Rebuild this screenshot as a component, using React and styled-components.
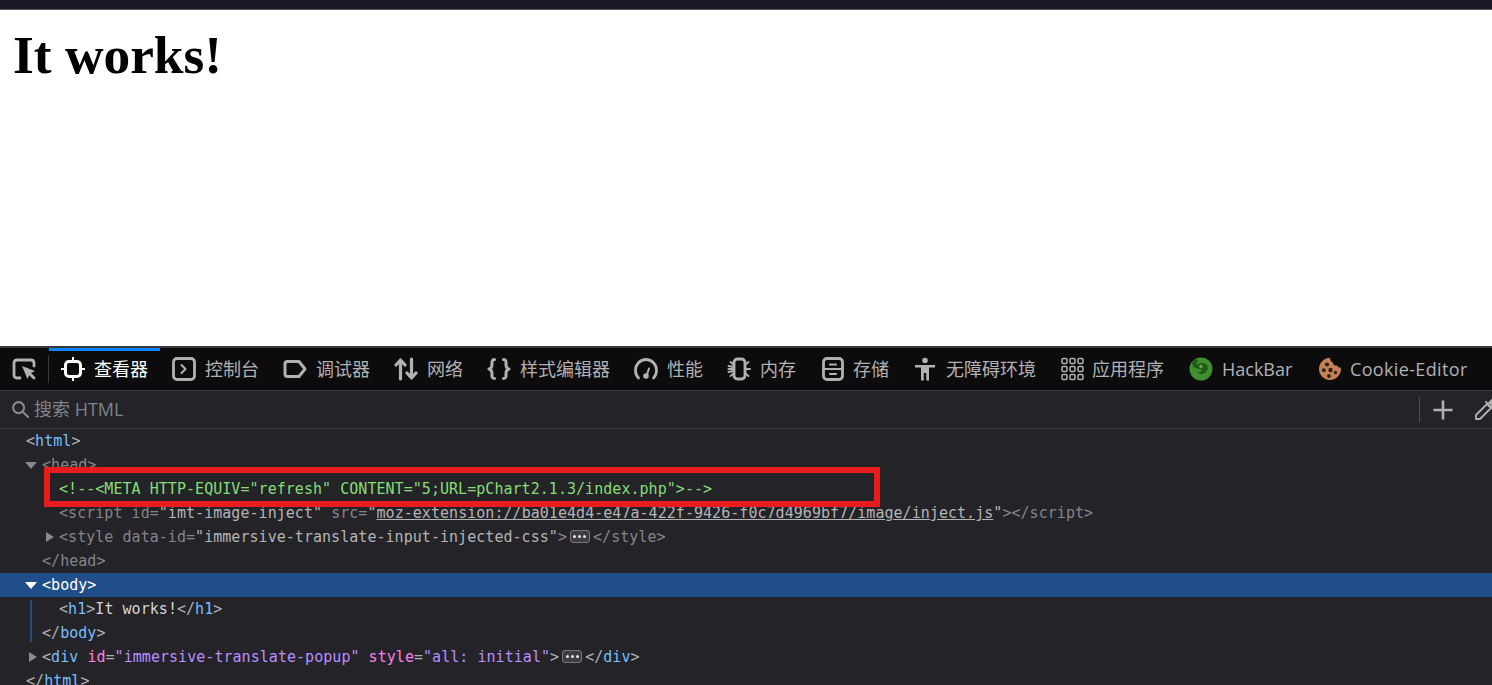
import React from "react";
import styled, { createGlobalStyle } from "styled-components";

const GlobalStyle = createGlobalStyle`
  html, body { margin: 0; padding: 0; height: 100%; overflow: hidden; background: #232328; }
  #root { height: 100%; }
`;

const Screen = styled.div`
  height: 685px;
  display: flex;
  flex-direction: column;
  overflow: hidden;
`;

const BrowserEdge = styled.div`
  height: 9px;
  flex: none;
  background: #1a1825;
  border-bottom: 1px solid #55555c;
`;

const PageArea = styled.div`
  height: 336px;
  flex: none;
  background: #fff;
  padding: 14px 0 0 13px;
  box-sizing: border-box;
`;

const Heading = styled.h1`
  margin: 0;
  font: bold 53.4px/62px "Liberation Serif", "Times New Roman", serif;
  color: #000;
`;

const Toolbar = styled.div`
  height: 42px;
  flex: none;
  display: flex;
  align-items: stretch;
  background: #0c0c0d;
  border-top: 2px solid #38383d;
  border-bottom: 1px solid #38383d;
  overflow: hidden;
`;

const PickerButton = styled.div`
  width: 36px;
  padding-left: 12px;
  display: flex;
  align-items: center;
  color: #b1b1b3;
`;

const ToolbarSep = styled.div`
  width: 1px;
  height: 28px;
  align-self: center;
  background: #38383d;
`;

const Tab = styled.div`
  position: relative;
  display: flex;
  align-items: center;
  flex: none;
  width: ${(p) => p.$width}px;
  box-sizing: border-box;
  padding-left: 12px;
  gap: ${(p) => p.$gap}px;
  color: ${(p) => (p.$active ? "#fff" : "#b1b1b3")};
  font: 18px/24px "Open Sans", "Noto Sans CJK SC", sans-serif;
  white-space: nowrap;
  &::before {
    content: "";
    display: ${(p) => (p.$active ? "block" : "none")};
    position: absolute;
    left: 0;
    right: 0;
    top: 0;
    height: 3px;
    background: #0a84ff;
  }
`;

const TabLabel = styled.span`
  letter-spacing: ${(p) => p.$spread || 0}px;
`;

const Icon = styled.svg`
  width: 24px;
  height: 24px;
  flex: none;
  fill: none;
  stroke: currentColor;
  stroke-width: ${(p) => (p.$sw === undefined ? 2.2 : p.$sw)};
  stroke-linecap: round;
  stroke-linejoin: round;
`;

const SearchIcon = styled(Icon)`
  width: 19px;
  height: 19px;
  color: #8a8a8e;
`;

const SearchBar = styled.div`
  height: 37px;
  flex: none;
  display: flex;
  align-items: center;
  padding-left: 11px;
  background: #232328;
  border-bottom: 1px solid #38383d;
  overflow: hidden;
`;

const SearchText = styled.div`
  flex: 1;
  margin-left: 4px;
  padding-bottom: 2px;
  color: #7f8389;
  font: 18px/24px "Open Sans", "Noto Sans CJK SC", sans-serif;
`;

const SearchSep = styled.div`
  width: 1px;
  height: 25px;
  background: #4a4a4f;
`;

const SearchAction = styled.div`
  flex: none;
  width: 24px;
  height: 24px;
  margin-left: ${(p) => p.$gap}px;
  margin-right: ${(p) => p.$after || 0}px;
  color: #b1b1b3;
`;

const Tree = styled.div`
  position: relative;
  flex: 1;
  background: #232328;
  font: 15px/24px "DejaVu Sans Mono", "Liberation Mono", monospace;
  letter-spacing: 0.04px;
  overflow: hidden;
`;

const Row = styled.div`
  position: relative;
  height: 24px;
  box-sizing: border-box;
  padding-left: ${(p) => p.$indent}px;
  white-space: nowrap;
  background: ${(p) => (p.$selected ? "#204e8a" : "transparent")};
  &::before {
    content: "";
    display: ${(p) => (p.$guide ? "block" : "none")};
    position: absolute;
    left: 30px;
    top: ${(p) => (p.$guide === "start" ? 3 : 0)}px;
    bottom: ${(p) => (p.$guide === "end" ? 3 : 0)}px;
    width: 2px;
    background: #204e8a;
  }
`;

const Twisty = styled.span`
  position: absolute;
  left: ${(p) => p.$left}px;
  top: ${(p) => (p.$open ? 9 : 7)}px;
  width: 0;
  height: 0;
  ${(p) =>
    p.$open
      ? `border-left: 6px solid transparent; border-right: 6px solid transparent; border-top: 7px solid ${p.$color};`
      : `border-top: 5.5px solid transparent; border-bottom: 5.5px solid transparent; border-left: 8px solid ${p.$color};`}
`;

const tokenColors = {
  punct: "#b1b1b3",
  tag: "#75bfff",
  attr: "#ff7de9",
  value: "#b98eff",
  comment: "#86de74",
  dim: "#858589",
  soft: "#b4b4b6",
  text: "#d7d7db",
  white: "#fff",
};

const Tok = styled.span`
  color: ${(p) => tokenColors[p.$kind]};
  text-decoration: ${(p) => (p.$link ? "underline" : "none")};
`;

const Ellipsis = styled.span`
  display: inline-flex;
  align-items: center;
  justify-content: center;
  gap: 2px;
  width: 20px;
  height: 13px;
  margin: 0 3px;
  vertical-align: 4px;
  box-sizing: border-box;
  border: 1px solid #77777b;
  border-radius: 3px;
  background: #3d3d42;
`;

const Dot = styled.i`
  display: block;
  width: 3px;
  height: 3px;
  border-radius: 50%;
  background: #e6e6e8;
`;

const RedBox = styled.div`
  position: absolute;
  left: 44px;
  top: 38px;
  width: 836px;
  height: 40px;
  box-sizing: border-box;
  border: 6px solid #e81c1c;
`;

const More = () => (
  <Ellipsis>
    <Dot />
    <Dot />
    <Dot />
  </Ellipsis>
);

const tabs = [
  {
    label: "查看器", width: 111, gap: 9, active: true,
    icon: (
      <Icon viewBox="0 0 24 24" $sw={3}>
        <rect x="4.5" y="4.5" width="15" height="15" rx="3.5" />
        <path d="M12 0.5V3.5M12 20.5V23.5M0.5 12H3.5M20.5 12H23.5" strokeWidth="2" />
      </Icon>
    ),
  },
  {
    label: "控制台", width: 111, gap: 9,
    icon: (
      <Icon viewBox="0 0 24 24" $sw={2.8}>
        <rect x="1.5" y="1.5" width="21" height="21" rx="3.5" />
        <path d="M9.5 8L13.5 12L9.5 16" strokeWidth="2" />
      </Icon>
    ),
  },
  {
    label: "调试器", width: 111, gap: 9,
    icon: (
      <Icon viewBox="0 0 24 24" $sw={3}>
        <path d="M4.5 4.5H16L22 12L16 19.5H4.5C3 19.5 2 18.5 2 17V7C2 5.5 3 4.5 4.5 4.5Z" />
      </Icon>
    ),
  },
  {
    label: "网络", width: 93, gap: 9,
    icon: (
      <Icon viewBox="0 0 24 24" $sw={3.2}>
        <path d="M6.5 22V3M2 8L6.5 3L11 8M17.5 2V21M13 16L17.5 21L22 16" />
      </Icon>
    ),
  },
  {
    label: "样式编辑器", width: 147, gap: 9,
    icon: (
      <Icon viewBox="0 0 24 24" $sw={3}>
        <path d="M7.5 2.5C4.5 2.5 5 5 5 7.5C5 10 4.5 11.5 2 12C4.5 12.5 5 14 5 16.5C5 19 4.5 21.5 7.5 21.5" />
        <path d="M16.5 2.5C19.5 2.5 19 5 19 7.5C19 10 19.5 11.5 22 12C19.5 12.5 19 14 19 16.5C19 19 19.5 21.5 16.5 21.5" />
      </Icon>
    ),
  },
  {
    label: "性能", width: 93, gap: 9,
    icon: (
      <Icon viewBox="0 0 24 24" $sw={2.8}>
        <path d="M4.5 21C2.5 19 1.5 16.5 1.5 13.5C1.5 7.5 6 2.5 12 2.5C18 2.5 22.5 7.5 22.5 13.5C22.5 16.5 21.5 19 19.5 21" />
        <path d="M12.5 19L15 11.5" strokeWidth="2" />
        <circle cx="12" cy="19" r="2.8" fill="currentColor" stroke="none" />
      </Icon>
    ),
  },
  {
    label: "内存", width: 94, gap: 9,
    icon: (
      <Icon viewBox="0 0 24 24" $sw={1.9}>
        <rect x="7" y="2" width="11" height="20" rx="3.5" strokeWidth="2.8" />
        <path d="M3.5 5L6.5 7.5M1.5 12H6.5M3.5 19L6.5 16.5M1.5 9L6.5 10M1.5 15L6.5 14M21.5 5L18.5 7.5M23 12H18.5M21.5 19L18.5 16.5" />
      </Icon>
    ),
  },
  {
    label: "存储", width: 92, gap: 8,
    icon: (
      <Icon viewBox="0 0 24 24" $sw={2.2}>
        <rect x="2.5" y="1.5" width="19" height="21" rx="3.5" strokeWidth="2.8" />
        <path d="M2.5 12H21.5M9 7.5H15M9 17H15" />
      </Icon>
    ),
  },
  {
    label: "无障碍环境", width: 148, gap: 9,
    icon: (
      <Icon viewBox="0 0 24 24" $sw={0}>
        <circle cx="12" cy="3.5" r="2.8" fill="currentColor" />
        <path d="M2 8H22V10.6H16V23.5H13.2V16H10.8V23.5H8V10.6H2Z" fill="currentColor" />
      </Icon>
    ),
  },
  {
    label: "应用程序", width: 128, gap: 7,
    icon: (
      <Icon viewBox="0 0 24 24" $sw={1.5}>
        {[1.5, 9.5, 17.5].flatMap((y) =>
          [1.5, 9.5, 17.5].map((x) => <rect key={x + "-" + y} x={x - 0.5} y={y} width="5" height="5" rx="1.2" />)
        )}
      </Icon>
    ),
  },
  {
    label: "HackBar", width: 129, gap: 9,
    icon: (
      <Icon viewBox="0 0 24 24" $sw={0}>
        <circle cx="12" cy="12" r="11.5" fill="#3f8f2f" />
        <path d="M3 5C5 2 8 2 10 3C8 4 7 6 8 8C10 6 14 5 17 7C20 9 19 14 16 16C13 18 9 17 8 15C10 16 12 15 13 13C11 12 8 12 6 11C4 10 3 7 3 5Z" fill="#1f5c1a" />
        <circle cx="12" cy="9.5" r="1.8" fill="#5fa845" />
      </Icon>
    ),
  },
  {
    label: "Cookie-Editor", width: 160, gap: 8, spread: 0.35,
    icon: (
      <Icon viewBox="0 0 24 24" $sw={0}>
        <path d="M12 0.8C6 1 1 6 1 12C1 18 6 23 12 23C18 23 23 18 23 12C23 11.5 23 11 22.8 10.6C21 10.8 19.5 10 19 8.6C16.8 8.8 15 7.5 14.8 5.5C13.2 4.8 12 3 12 0.8Z" fill="#c68058" />
        <circle cx="9" cy="7.5" r="2.1" fill="#2b211c" />
        <circle cx="5.8" cy="13.2" r="1.9" fill="#2b211c" />
        <circle cx="12.5" cy="13" r="2.2" fill="#2b211c" />
        <circle cx="17.5" cy="15.5" r="1.7" fill="#2b211c" />
        <circle cx="11" cy="19" r="1.9" fill="#2b211c" />
      </Icon>
    ),
  },
];

export default function App() {
  return (
    <Screen>
      <GlobalStyle />
      <BrowserEdge />
      <PageArea>
        <Heading>It works!</Heading>
      </PageArea>

      <Toolbar>
        <PickerButton>
          <Icon viewBox="0 0 24 24" $sw={2.8}>
            <path d="M8 21H5C3 21 2 20 2 18V6C2 4 3 3 5 3H19C21 3 22 4 22 6V9" />
            <path d="M10 9L23 14L18 16.5L15.5 22Z" fill="currentColor" stroke="none" />
            <path d="M17 16L22 21" />
          </Icon>
        </PickerButton>
        <ToolbarSep />
        {tabs.map((t) => (
          <Tab key={t.label} $active={t.active} $width={t.width} $gap={t.gap}>
            {t.icon}
            <TabLabel $spread={t.spread}>{t.label}</TabLabel>
          </Tab>
        ))}
      </Toolbar>

      <SearchBar>
        <SearchIcon viewBox="0 0 20 20" $sw={2.2}>
          <circle cx="8" cy="8" r="5.8" />
          <path d="M12.5 12.5L18 18" />
        </SearchIcon>
        <SearchText>搜索 HTML</SearchText>
        <SearchSep />
        <SearchAction $gap={11}>
          <Icon viewBox="0 0 24 24" $sw={2.6}>
            <path d="M12 2.5V21.5M2.5 12H21.5" strokeLinecap="butt" />
          </Icon>
        </SearchAction>
        <SearchAction $gap={18} $after={-5}>
          <Icon viewBox="0 0 24 24" $sw={1.8}>
            <path d="M14 6L18 10L7 21H3V17Z" />
            <path d="M13 4L20 11M16 5L19 2C20 1 22 1 23 2C24 3 24 5 23 6L19 8" fill="currentColor" />
          </Icon>
        </SearchAction>
      </SearchBar>

      <Tree>
        <Row $indent={26}>
          <Tok $kind="punct">&lt;</Tok><Tok $kind="tag">html</Tok><Tok $kind="punct">&gt;</Tok>
        </Row>
        <Row $indent={42}>
          <Twisty $open $left={25} $color="#8a8a8e" />
          <Tok $kind="dim">&lt;head&gt;</Tok>
        </Row>
        <Row $indent={59}>
          <Tok $kind="comment">&lt;!--&lt;META HTTP-EQUIV="refresh" CONTENT="5;URL=pChart2.1.3/index.php"&gt;--&gt;</Tok>
        </Row>
        <Row $indent={59}>
          <Tok $kind="dim">&lt;script id=</Tok><Tok $kind="soft">"imt-image-inject"</Tok>
          <Tok $kind="dim"> src=</Tok><Tok $kind="soft">"</Tok>
          <Tok $kind="soft" $link>moz-extension://ba01e4d4-e47a-422f-9426-f0c7d4969bf7/image/inject.js</Tok>
          <Tok $kind="soft">"</Tok><Tok $kind="dim">&gt;&lt;/script&gt;</Tok>
        </Row>
        <Row $indent={59}>
          <Twisty $left={46} $color="#8a8a8e" />
          <Tok $kind="dim">&lt;style data-id=</Tok><Tok $kind="soft">"immersive-translate-input-injected-css"</Tok>
          <Tok $kind="dim">&gt;</Tok><More /><Tok $kind="dim">&lt;/style&gt;</Tok>
        </Row>
        <Row $indent={42}>
          <Tok $kind="dim">&lt;/head&gt;</Tok>
        </Row>
        <Row $indent={42} $selected>
          <Twisty $open $left={25} $color="#fff" />
          <Tok $kind="white">&lt;body&gt;</Tok>
        </Row>
        <Row $indent={59} $guide="start">
          <Tok $kind="punct">&lt;</Tok><Tok $kind="tag">h1</Tok><Tok $kind="punct">&gt;</Tok>
          <Tok $kind="text">It works!</Tok>
          <Tok $kind="punct">&lt;/</Tok><Tok $kind="tag">h1</Tok><Tok $kind="punct">&gt;</Tok>
        </Row>
        <Row $indent={42} $guide="end">
          <Tok $kind="punct">&lt;/</Tok><Tok $kind="tag">body</Tok><Tok $kind="punct">&gt;</Tok>
        </Row>
        <Row $indent={42}>
          <Twisty $left={29} $color="#8a8a8e" />
          <Tok $kind="punct">&lt;</Tok><Tok $kind="tag">div</Tok>{" "}
          <Tok $kind="attr">id</Tok><Tok $kind="punct">=</Tok><Tok $kind="value">"immersive-translate-popup"</Tok>{" "}
          <Tok $kind="attr">style</Tok><Tok $kind="punct">=</Tok><Tok $kind="value">"all: initial"</Tok>
          <Tok $kind="punct">&gt;</Tok><More />
          <Tok $kind="punct">&lt;/</Tok><Tok $kind="tag">div</Tok><Tok $kind="punct">&gt;</Tok>
        </Row>
        <Row $indent={26}>
          <Tok $kind="punct">&lt;/</Tok><Tok $kind="tag">html</Tok><Tok $kind="punct">&gt;</Tok>
        </Row>
        <RedBox />
      </Tree>
    </Screen>
  );
}
